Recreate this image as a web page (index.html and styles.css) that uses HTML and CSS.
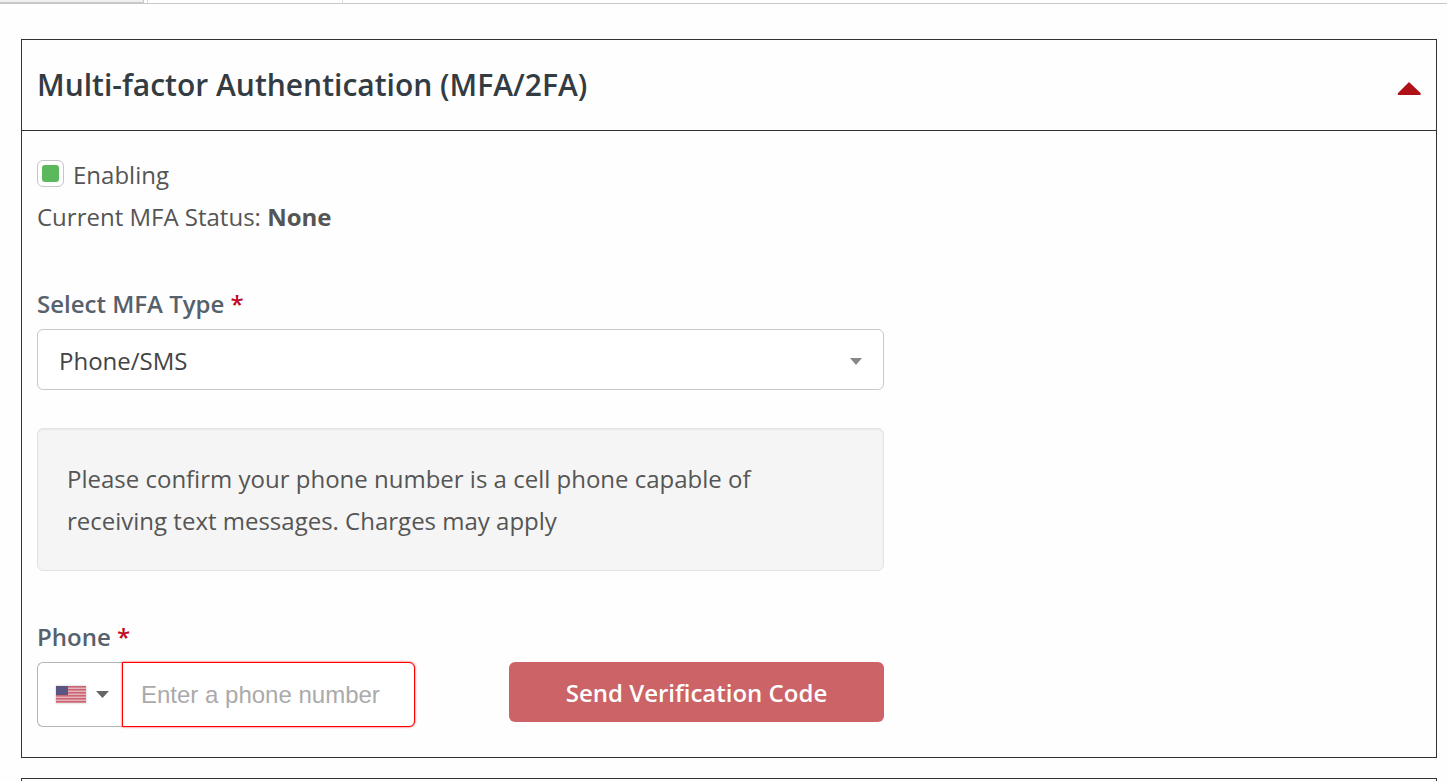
FILE: index.html
```html
<!doctype html>
<html lang="en">
<head>
  <meta charset="utf-8">
  <title>Multi-factor Authentication</title>
  <link rel="stylesheet" href="styles.css">
</head>
<body>
  <div class="tabs">
    <div class="tab-idle"></div>
    <div class="tab-open"></div>
    <div class="tab-rest"></div>
  </div>
  <main class="panels">
    <section class="panel">
      <header class="panel-head">
        <h2 class="panel-title">Multi-factor Authentication (MFA/2FA)</h2>
        <button class="panel-toggle" type="button" aria-label="Collapse">
          <svg width="24" height="13" viewBox="0 0 24 13"><path d="M11.500.5q.5-.5 1 0L23.500 11q1 2-.8 2H1.800q-1.800 0-.8-2z" fill="#b01116"/></svg>
        </button>
      </header>
      <div class="panel-body">
        <form class="mfa-form">
          <div class="check-row">
            <input class="check" type="checkbox" id="enabling" checked>
            <label for="enabling">Enabling</label>
          </div>
          <p class="status">Current MFA Status: <strong>None</strong></p>
          <label class="field-label" for="mfa-type">Select MFA Type <span class="required">*</span></label>
          <div class="select-wrap">
            <select class="select" id="mfa-type">
              <option>Phone/SMS</option>
            </select>
            <svg class="select-arrow" width="12" height="7" viewBox="0 0 12 7"><path d="M0 0h12L6 7z" fill="#888"/></svg>
          </div>
          <p class="well">Please confirm your phone number is a cell phone capable of receiving text messages. Charges may apply</p>
          <label class="field-label" for="phone">Phone <span class="required">*</span></label>
          <div class="phone-row">
            <div class="phone-group">
              <button class="country" type="button" aria-label="Country">
                <svg class="flag" width="30" height="17" viewBox="0 0 30 17">
                  <path fill="#e3b3b9" d="M0 0h30v17H0z"/>
                  <path stroke="#cc6472" d="M0 .5h30M0 3.500h30M0 6.500h30M0 9.500h30M0 12.500h30M0 15.500h30"/>
                  <path stroke="#d68791" d="M0 1.500h30M0 4.500h30M0 7.500h30M0 10.500h30M0 13.500h30M0 16.500h30"/>
                  <path fill="#5b5584" d="M0 0h12v9H0z"/>
                </svg>
                <svg width="13" height="7" viewBox="0 0 13 7"><path d="M0 0h13L6.500 7z" fill="#666"/></svg>
              </button>
              <input class="phone" type="tel" id="phone" placeholder="Enter a phone number">
            </div>
            <button class="send" type="button">Send Verification Code</button>
          </div>
        </form>
      </div>
    </section>
    <section class="panel panel-next"></section>
  </main>
</body>
</html>
```

FILE: styles.css
```css
* {
  box-sizing: border-box;
}
body {
  display: flex;
  flex-flow: column nowrap;
  margin: 0;
  min-height: 100vh;
  background: #fefefe;
  color: #555;
  font-family: "Open Sans", sans-serif;
  font-size: 24px;
  line-height: 42px;
}
.tabs {
  display: flex;
  height: 4px;
}
.tab-idle {
  width: 144px;
  background: #f0f0f0;
  border-right: 1px solid #c8c8c8;
  border-bottom: 2px solid #c8c8c8;
}
.tab-open {
  width: 199px;
  background: linear-gradient(to right, transparent 3px, #ddd 3px, #ddd 4px, transparent 4px);
  border-right: 1px solid #ddd;
  border-bottom: 1px solid #c8c8c8;
}
.tab-rest {
  flex: 1;
  border-bottom: 1px solid #c8c8c8;
}
.panels {
  flex: auto;
  display: flex;
  flex-flow: column nowrap;
  gap: 20px;
  padding: 35px 10px 0 21px;
}
.panel {
  border: 1px solid #333;
}
.panel-next {
  flex: auto;
  border-bottom: 0;
}
.panel-head {
  display: flex;
  align-items: center;
  justify-content: space-between;
  height: 91px;
  padding: 0 15px;
  border-bottom: 1px solid #333;
}
.panel-title {
  margin: 0;
  color: #333c42;
  font-size: 30px;
  font-weight: 600;
}
.panel-toggle {
  display: flex;
  padding: 6px 0 0;
  border: 0;
  background: none;
}
.panel-body {
  padding: 23px 15px 30px;
}
.mfa-form {
  width: 61.2%;
}
.check-row {
  display: flex;
  align-items: center;
  gap: 9px;
}
.check {
  appearance: none;
  display: grid;
  place-items: center;
  width: 27px;
  height: 27px;
  margin: 0 0 4px;
  border: 1px solid #c3c6cc;
  border-radius: 6px;
  background: #fff;
}
.check:checked::before {
  content: "";
  width: 17px;
  height: 17px;
  border-radius: 3px;
  background: #5cb85c;
}
.status {
  margin: 0 0 45px;
}
.field-label {
  display: block;
  color: #56616b;
  font-weight: 600;
}
.required {
  color: #c10a27;
}
.select-wrap {
  position: relative;
  margin-top: 4px;
}
.select {
  appearance: none;
  display: block;
  width: 100%;
  height: 61px;
  padding: 2px 21px 0;
  border: 1px solid #c8c8cd;
  border-radius: 6px;
  background: #fff;
  color: #444;
  font: inherit;
}
.select-arrow {
  position: absolute;
  right: 22px;
  top: 29px;
  pointer-events: none;
}
.well {
  margin: 38px 0 45px;
  padding: 29px 29px 28px;
  border: 1px solid #e3e3e3;
  border-radius: 6px;
  background: #f5f5f5;
  box-shadow: inset 0 1px 2px rgba(0, 0, 0, .06);
}
.phone-row {
  display: flex;
  align-items: flex-start;
  justify-content: space-between;
  margin-top: 4px;
}
.phone-group {
  display: flex;
  width: 378px;
}
.country {
  display: flex;
  align-items: center;
  gap: 10px;
  width: 85px;
  height: 65px;
  padding: 0 0 0 18px;
  border: 1px solid #b5b5b5;
  border-right: 0;
  border-radius: 6px 0 0 6px;
  background: #fff;
}
.flag {
  box-shadow: 0 0 2px #bbb;
}
.phone {
  flex: 1;
  min-width: 0;
  height: 65px;
  padding: 0 18px;
  border: 1px solid #f00;
  border-radius: 0 6px 6px 0;
  background: #fff;
  box-shadow: 0 0 2px #f00;
  font: 24px "Liberation Sans", sans-serif;
}
.phone::placeholder {
  color: #aaa;
}
.send {
  width: 375px;
  height: 60px;
  padding: 2px 0 0;
  border: 0;
  border-radius: 6px;
  background: #cc6366;
  color: #fff;
  font: inherit;
  font-weight: 600;
}
```
